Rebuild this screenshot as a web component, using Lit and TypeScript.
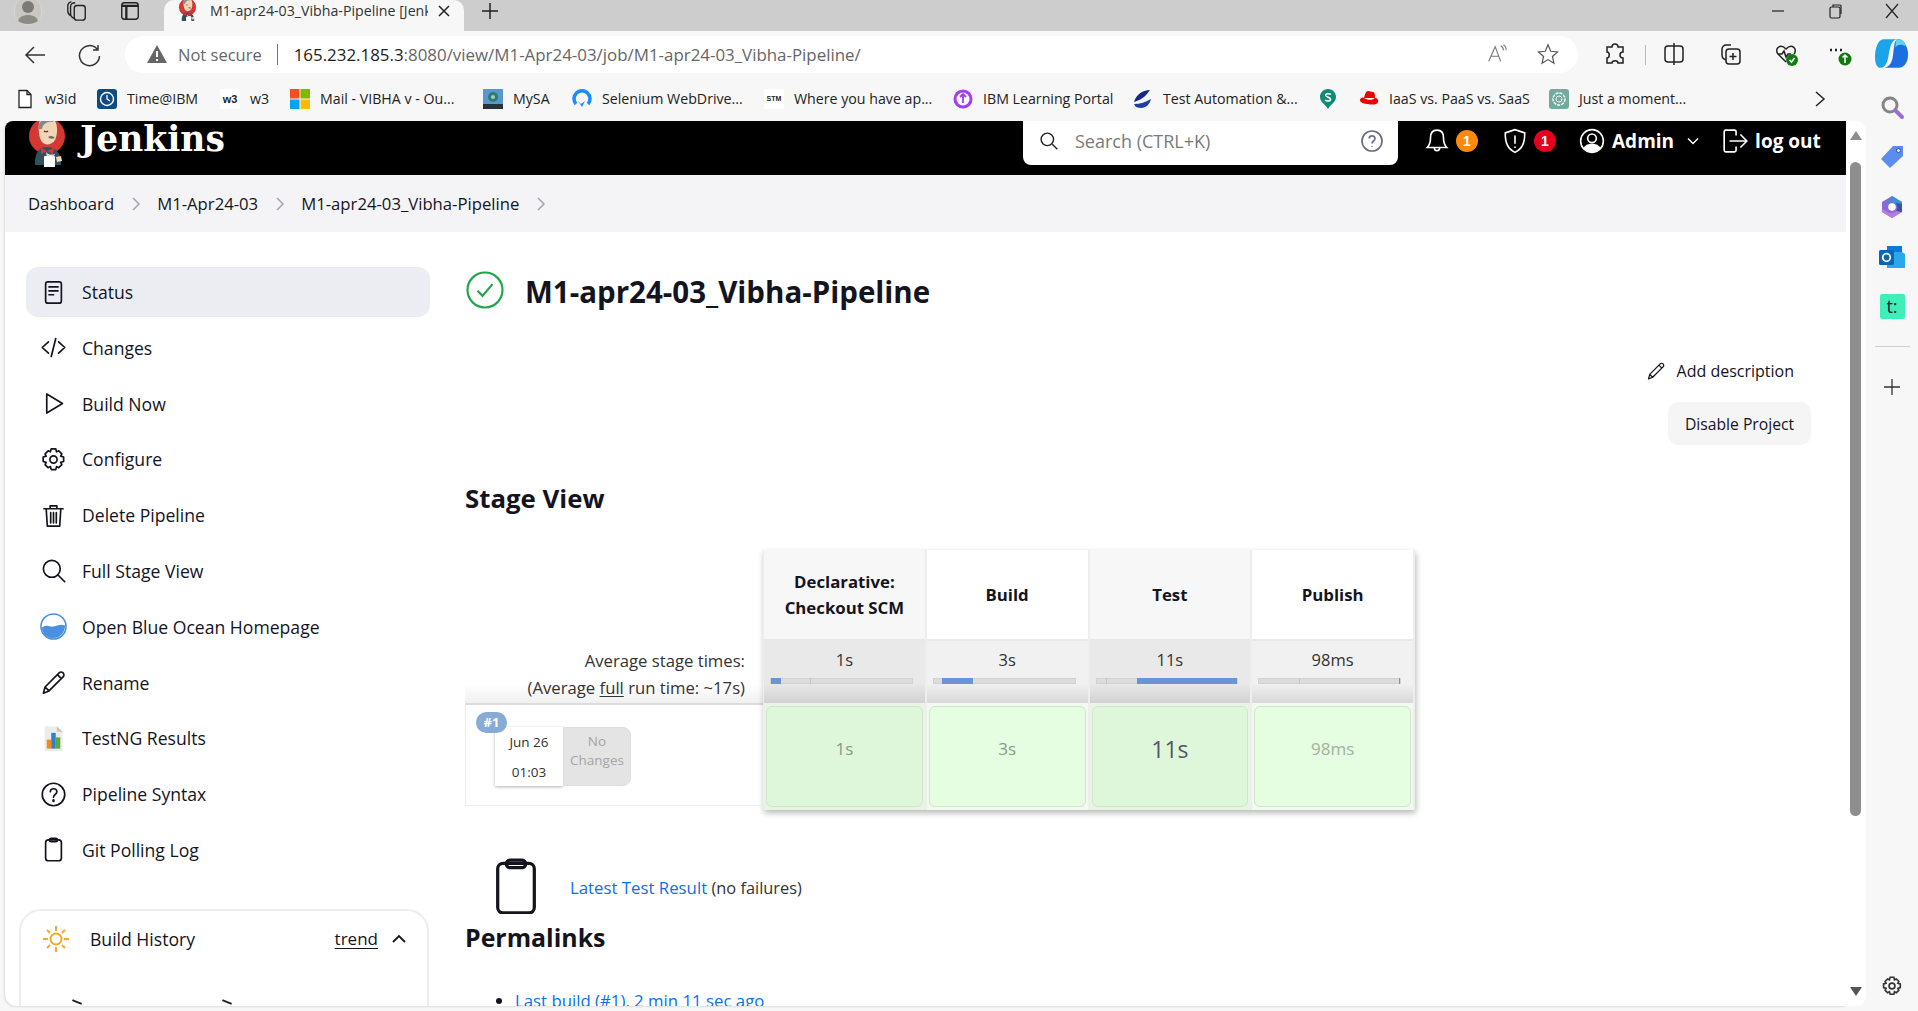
import { LitElement, html, css, svg } from 'lit';
import { customElement } from 'lit/decorators.js';

const butler = svg`
  <circle cx="20" cy="15" r="18" fill="#d33833"/>
  <path d="M8 44c-1-11 4-18 12-18s15 6 14 18z" fill="#335061"/>
  <path d="M12 2c1-6 15-7 17 0 2 5 1 13-1 17-3 5-10 6-13 2-3-4-4-13-3-19z" fill="#f0d6b7"/>
  <path d="M12 8c-2-8 6-11 11-10l4 3c-6-1-11 1-12 7z" fill="#7f8a90"/>
  <path d="M17 10c1 1 3 1 4 0" stroke="#49332a" stroke-width="1.200" fill="none"/>
  <path d="M21 16c3-2 5-1 7 1-3 1-5 1-7-1z" fill="#6d6b6d"/>
  <path d="M14 27l6 3 7-3-1 6-6-3-6 3z" fill="#d33833"/>
  <path d="M19 31c3 3 5 3 9 2l-3 6-5-1z" fill="#dcd9d8"/>
  <rect x="17" y="35" width="11" height="14" rx="1" fill="#fff"/>
  <path d="M29 36l5-1 1 5-5 1z" fill="#f0d6b7"/>
`;

const icons: Record<string, unknown> = {
  status: svg`<rect x="5" y="2.500" width="14" height="19" rx="2"/><path d="M8 7h8M8 10.500h8M8 14h4"/>`,
  changes: svg`<path d="M7.500 7 2 12l5.500 5M16.500 7l5.500 5-5.500 5M14 4l-4 16"/>`,
  play: svg`<path d="M6 3.500v17l14-8.500z"/>`,
  gear: svg`<circle cx="12" cy="12" r="3.200"/><path d="M10 2.500h4l.7 2.700 2-.9 2.700 2.700-1 2 2.600.8v4l-2.600.8 1 2-2.700 2.700-2-1-.7 2.700h-4l-.8-2.700-2 1-2.700-2.700 1-2-2.700-.8v-4l2.700-.8-1-2 2.700-2.700 2 .9z"/>`,
  trash: svg`<path d="M3.500 6h17M9 6V3.500h6V6M5.500 6l1 15.500h11l1-15.500M9.500 9.500v9M12 9.500v9M14.500 9.500v9"/>`,
  search: svg`<circle cx="10.500" cy="10.500" r="7.500"/><path d="m16 16 6 6"/>`,
  pencil: svg`<path d="M3 21.500 4.500 16 17 3.500c1-1 2.500-1 3.500 0s1 2.500 0 3.500L8 19.500zM4.500 16 8 19.500M15.500 5l3.500 3.500"/>`,
  help: svg`<circle cx="12" cy="12" r="10"/><path d="M9.200 9.500c0-3.500 5.800-3.500 5.800 0 0 2.500-3 2.500-3 5"/><path d="M12 17.200v.6" stroke-width="2.200"/>`,
  clipboard: svg`<rect x="5" y="3.500" width="14" height="18.500" rx="2.500"/><rect x="8.500" y="2" width="7" height="3" rx="1.500"/>`,
};

const icon = (name: string) => html`<svg class="icon" viewBox="0 0 24 24">${icons[name]}</svg>`;

const blueOcean = html`<svg class="icon" viewBox="0 0 28 28"><circle cx="14" cy="14" r="13" fill="#fff" stroke="#4a90e2" stroke-width="1.600"/><path d="M2 15c6-4 8 0 12-1s7-3 12-1c0 7-5 13-12 13S2 21 2 15z" fill="#4a90e2" stroke="none"/></svg>`;

const testNg = html`<svg class="icon plain" viewBox="0 0 24 24"><path d="M4 1h11l5 5v17H4z" fill="#ecece8"/><path d="M15 1v5h5z" fill="#c4c4bd"/><rect x="6" y="13" width="4" height="8" fill="#f08a1d"/><rect x="10" y="7" width="4" height="14" fill="#2f7fd1"/><rect x="14" y="11" width="4" height="10" fill="#58a83a"/></svg>`;

const navItems = [
  { label: 'Status', icon: icon('status'), active: true },
  { label: 'Changes', icon: icon('changes') },
  { label: 'Build Now', icon: icon('play') },
  { label: 'Configure', icon: icon('gear') },
  { label: 'Delete Pipeline', icon: icon('trash') },
  { label: 'Full Stage View', icon: icon('search') },
  { label: 'Open Blue Ocean Homepage', icon: blueOcean },
  { label: 'Rename', icon: icon('pencil') },
  { label: 'TestNG Results', icon: testNg },
  { label: 'Pipeline Syntax', icon: icon('help') },
  { label: 'Git Polling Log', icon: icon('clipboard') },
];

const bookmarks = [
  { label: 'w3id', w: 31, icon: html`<svg viewBox="0 0 20 20"><path d="M4 1.500h8l4 4v13H4z" fill="#fff" stroke="#222" stroke-width="1.300"/><path d="M12 1.500v4h4" fill="none" stroke="#222" stroke-width="1.300"/></svg>` },
  { label: 'Time@IBM', w: 72, icon: html`<svg viewBox="0 0 20 20"><rect width="20" height="20" rx="3" fill="#0f4a80"/><circle cx="10" cy="10" r="6.500" fill="none" stroke="#fff" stroke-width="1.400"/><path d="M10 6v4l3 2" fill="none" stroke="#fff" stroke-width="1.300"/></svg>` },
  { label: 'w3', w: 19, icon: html`<span class="w3-box">w3</span>` },
  { label: 'Mail - VIBHA v - Ou...', w: 142, icon: html`<svg viewBox="0 0 20 20"><rect width="9.500" height="9.500" fill="#f25022"/><rect x="10.500" width="9.500" height="9.500" fill="#7fba00"/><rect y="10.500" width="9.500" height="9.500" fill="#00a4ef"/><rect x="10.500" y="10.500" width="9.500" height="9.500" fill="#ffb900"/></svg>` },
  { label: 'MySA', w: 38, icon: html`<svg viewBox="0 0 20 20"><rect width="20" height="20" fill="#5b97cf"/><circle cx="10" cy="8" r="5" fill="#2f7d6b"/><circle cx="10" cy="8" r="2" fill="#9fd0c0"/><rect y="15" width="20" height="5" fill="#27323b"/></svg>` },
  { label: 'Selenium WebDrive...', w: 141, icon: html`<svg viewBox="0 0 20 20"><path d="M4 15A8 8 0 1 1 16 15" fill="none" stroke="#1a8cff" stroke-width="3.500"/><path d="m6 12 3 3 4-3-3 6z" fill="#1a8cff"/></svg>` },
  { label: 'Where you have ap...', w: 138, icon: html`<span class="stm-box">STM</span>` },
  { label: 'IBM Learning Portal', w: 129, icon: html`<svg viewBox="0 0 20 20"><circle cx="10" cy="10" r="9.500" fill="#a33df0"/><circle cx="10" cy="10" r="6.500" fill="#fff"/><path d="M10 5v9M7 8l3-3 3 3" stroke="#a33df0" stroke-width="1.800" fill="none"/></svg>` },
  { label: 'Test Automation &...', w: 134, icon: html`<svg viewBox="0 0 20 20"><path d="M1 13C3 6 9 1 17 1c-3 4-6 9-16 12z" fill="#14288a"/><path d="M1 15c6 0 12-2 17-5-1 5-5 9-10 9-3 0-6-1-7-4z" fill="#1f3fa8"/></svg>` },
  { label: '', w: 20, icon: html`<svg viewBox="0 0 20 20"><path d="M10 0c5 0 8 4 8 8 0 5-5 7-8 12-3-5-8-7-8-12 0-4 3-8 8-8z" fill="#0f8a74"/><path d="M13 5.500c-1-1-5-1.500-5.500.5s5.500 2 5 4.500-4.500 1.500-5.500.5" stroke="#fff" stroke-width="1.500" fill="none"/></svg>` },
  { label: 'IaaS vs. PaaS vs. SaaS', w: 139, icon: html`<svg viewBox="0 0 20 20"><path d="M5 9c1-4 2-7 4-7s3 1 5 1 2 4 2 6z" fill="#e00"/><path d="M1 11c0-2 3-3 4-2 3 2 7 3 11 0 2 0 4 2 3 4-1 3-6 3-10 2-3 0-8-1-8-4z" fill="#e00"/></svg>` },
  { label: 'Just a moment...', w: 108, icon: html`<svg viewBox="0 0 20 20"><rect width="20" height="20" rx="3" fill="#74aa9c"/><circle cx="10" cy="10" r="6" fill="none" stroke="#fff" stroke-width="1.400" stroke-dasharray="3 1"/><circle cx="10" cy="10" r="3" fill="none" stroke="#fff"/></svg>` },
];

const stages = [
  { name: ['Declarative:', 'Checkout SCM'], time: '1s', bar: [0, 7], tick: 28, shade: true, big: false, dim: false },
  { name: ['Build'], time: '3s', bar: [6, 28], tick: 6, shade: false, big: false, dim: false },
  { name: ['Test'], time: '11s', bar: [29, 100], tick: 7, shade: true, big: true, dim: false },
  { name: ['Publish'], time: '98ms', bar: [99.4, 100], tick: 28, shade: false, big: false, dim: true },
];

@customElement('app-root')
export class AppRoot extends LitElement {
  static styles = css`
    :host {
      display: flex;
      flex-direction: column;
      height: 1011px;
      overflow: hidden;
      background: #f7f7f7;
      font-family: 'Open Sans', 'Noto Sans', sans-serif;
      color: #14141f;
    }
    svg { display: block; flex: none; }

    /* browser chrome */
    .tabbar {
      height: 31px;
      background: #cdcdcd;
      display: flex;
      align-items: center;
      flex: none;
      box-sizing: border-box;
      padding-bottom: 10px;
      overflow: hidden;
    }
    .avatar { width: 30px; height: 30px; margin-left: 13px; }
    .tb-ico { width: 22px; height: 22px; fill: none; stroke: #222; stroke-width: 1.500; }
    .tabs-ico { margin-left: 23px; }
    .side-ico { margin-left: 31px; }
    .tab {
      margin-left: 23px;
      width: 300px;
      height: 31px;
      align-self: flex-start;
      margin-bottom: -10px;
      background: #f7f7f7;
      border-radius: 10px 10px 0 0;
      display: flex;
      align-items: center;
      font-size: 14.200px;
      color: #333;
      box-sizing: border-box;
      padding: 0 0 10px 13px;
    }
    .tab svg.fav { width: 21px; height: 22px; margin-right: 12px; }
    .tab span { width: 218px; overflow: hidden; white-space: nowrap; }
    .tab .x { width: 14px; height: 14px; margin-left: 9px; fill: none; stroke: #222; stroke-width: 1.500; }
    .plus { width: 18px; height: 18px; margin-left: 17px; stroke: #222; stroke-width: 1.500; }
    .winctl { margin-left: auto; display: flex; gap: 41px; padding-right: 18px; align-items: center; }
    .winctl svg { width: 16px; height: 16px; fill: none; stroke: #222; stroke-width: 1.200; }

    .toolbar { height: 48px; display: flex; align-items: flex-start; flex: none; padding-top: 5px; box-sizing: border-box; }
    .nav-ico { width: 24px; height: 24px; fill: none; stroke: #333; stroke-width: 1.500; margin-top: 7px; }
    .back { margin-left: 23px; }
    .reload { margin-left: 31px; }
    .address {
      margin-left: 23px;
      width: 1453px;
      height: 37px;
      background: #fff;
      border-radius: 19px;
      display: flex;
      align-items: center;
      box-sizing: border-box;
      padding: 0 0 1px 22px;
      font-size: 16.500px;
      color: #666;
      white-space: nowrap;
    }
    .address .warn { width: 20px; height: 20px; margin-right: 11px; }
    .address .sep { width: 1px; height: 21px; background: #777; margin: 0 16px 0 15px; }
    .address .url { font-size: 16.900px; }
    .address b { font-weight: 400; color: #222; }
    .address .read { margin-left: auto; width: 22px; height: 22px; fill: none; stroke: #777; stroke-width: 1.200; }
    .address .star { width: 22px; height: 22px; margin: 0 19px 0 29px; fill: none; stroke: #555; stroke-width: 1.300; }
    .tools { display: flex; align-items: center; height: 37px; position: relative; flex: 1; }
    .tools svg { position: absolute; width: 24px; height: 24px; top: 6px; fill: none; stroke: #222; stroke-width: 1.500; }
    .tools .t1 { left: 25px; }
    .tools .tsep { position: absolute; left: 67px; top: 9px; width: 1px; height: 20px; background: #bbb; }
    .tools .t2 { left: 84px; }
    .tools .t3 { left: 140px; }
    .tools .t4 { left: 196px; }
    .tools .t5 { left: 250px; }
    .tools .t6 { left: 297px; top: 1px; width: 34px; height: 34px; stroke: none; }

    .bookmarks {
      height: 42px;
      display: flex;
      align-items: center;
      gap: 21px;
      padding: 0 0 3px 15px;
      box-sizing: border-box;
      flex: none;
      font-size: 14.200px;
      color: #222;
      white-space: nowrap;
    }
    .bm { display: flex; align-items: center; gap: 10px; }
    .bm svg { width: 20px; height: 20px; }
    .bm span.txt { display: block; }
    .w3-box, .stm-box {
      width: 20px;
      height: 20px;
      background: #fff;
      font: 700 11px 'Liberation Sans', sans-serif;
      display: flex;
      align-items: center;
      justify-content: center;
    }
    .stm-box { font-size: 7px; }
    .bm-more { width: 16px; height: 16px; margin-left: auto; margin-right: 90px; fill: none; stroke: #222; stroke-width: 1.500; }

    /* page */
    .window { flex: none; height: 885px; display: flex; }
    .page {
      margin-left: 5px;
      width: 1841px;
      height: 885px;
      background: #fff;
      overflow: hidden;
      border-radius: 8px 0 0 12px;
      box-shadow: -1px 1px 2px #ddd;
      font-size: 17.600px;
    }
    .scroll { width: 20px; height: 885px; background: #fff; border-radius: 0 10px 10px 0; position: relative; }
    .thumb { position: absolute; left: 4px; top: 41px; width: 11px; height: 654px; background: #8e8e8e; border-radius: 6px; }
    .arrow { position: absolute; left: 4px; width: 0; height: 0; border-left: 6.500px solid transparent; border-right: 6.500px solid transparent; }
    .arrow.up { top: 10px; border-bottom: 9px solid #8e8e8e; }
    .arrow.down { bottom: 10px; border-top: 9px solid #555; }
    .rail { flex: 1; display: flex; flex-direction: column; align-items: center; }
    .rail svg { width: 26px; height: 26px; margin-top: 24px; }
    .rail svg:first-child { margin-top: -27px; }
    .rail .t-box {
      width: 25px;
      height: 25px;
      margin-top: 24px;
      background: #3eefb9;
      border-radius: 2px;
      color: #123;
      font-size: 18px;
      text-align: center;
      line-height: 24px;
    }
    .rail .div { width: 35px; height: 1px; background: #ccc; margin-top: 27px; }
    .rail .add { width: 18px; height: 18px; margin-top: 31px; stroke: #333; stroke-width: 1.300; }
    .rail .cog { margin-top: auto; margin-bottom: 9px; width: 22px; height: 22px; fill: none; stroke: #333; stroke-width: 1.800; }

    /* jenkins header */
    .head { height: 54px; background: #000; display: flex; color: #fff; }
    .logo { width: 40px; height: 46px; margin: 0 0 0 22px; overflow: hidden; }
    .brand { font: 700 34.500px/36px 'DejaVu Serif', serif; margin: 0 0 0 13px; width: 146px; flex: none; white-space: nowrap; }
    .search {
      margin-left: 797px;
      width: 375px;
      height: 44px;
      background: #fff;
      border-radius: 0 0 8px 8px;
      display: flex;
      align-items: center;
      color: #7a7a7a;
      font-size: 18px;
      box-sizing: border-box;
      padding: 0 0 5px 16px;
    }
    .search .mag { width: 20px; height: 20px; margin-right: 16px; fill: none; stroke: #222; stroke-width: 1.700; }
    .search .q { width: 24px; height: 24px; margin-left: auto; margin-right: 14px; fill: none; stroke: #6d6d85; stroke-width: 1.700; }
    .head-items { display: flex; align-items: center; height: 40px; font-weight: 700; font-size: 19px; margin-left: 26px; }
    .head-items svg { fill: none; stroke: #fff; stroke-width: 1.500; width: 26px; height: 26px; }
    .count {
      width: 22px;
      height: 22px;
      border-radius: 50%;
      font: 700 14px/22px 'Liberation Sans', sans-serif;
      text-align: center;
      margin-left: 6px;
    }
    .count.orange { background: #fd8a0d; }
    .count.red { background: #e6001f; }
    .shield { margin-left: 24px; }
    .user { margin-left: 23px; }
    .user svg { stroke-width: 1.600; }
    .admin { margin-left: 7px; }
    .caret { width: 12px !important; height: 12px !important; margin-left: 13px; stroke-width: 1.500; }
    .out-ico { margin-left: 23px; }
    .out { margin-left: 7px; }

    .crumbs {
      height: 57px;
      background: #f4f4f6;
      display: flex;
      align-items: center;
      padding-left: 23px;
      font-size: 16.700px;
      font-weight: 500;
    }
    .crumbs svg { width: 12px; height: 16px; margin: 0 15.500px; fill: none; stroke: #a3a3b3; stroke-width: 1.500; }

    .body { display: flex; }
    .side { width: 404px; margin-left: 21px; padding-top: 35px; flex: none; }
    .nav { display: flex; flex-direction: column; gap: 5.800px; }
    .nav-item { height: 50px; display: flex; align-items: center; border-radius: 12px; font-weight: 500; }
    .nav-item.active { background: #ecedf2; }
    .nav-item .slot { width: 54px; margin-right: 2px; display: flex; justify-content: center; }
    .icon { width: 27px; height: 27px; fill: none; stroke: #14141f; stroke-width: 1.500; stroke-linecap: round; stroke-linejoin: round; }
    .icon.plain { stroke: none; }
    .history {
      margin: 34px 0 0 -7px;
      width: 410px;
      height: 140px;
      border: 2px solid #ecedf3;
      border-radius: 22px;
      box-sizing: border-box;
      position: relative;
    }
    .hist-head { display: flex; align-items: center; height: 56px; padding-left: 20px; font-weight: 500; }
    .hist-head svg.sun { width: 30px; height: 30px; margin-right: 19px; }
    .trend { margin-left: auto; font-size: 17px; text-decoration: underline; text-underline-offset: 3px; }
    .hist-head svg.up { width: 16px; height: 16px; margin: 0 20px 0 13px; fill: none; stroke: #14141f; stroke-width: 1.800; }
    .hist-marks { display: flex; gap: 140px; padding: 34px 0 0 51px; }
    .hist-marks i { display: block; width: 10px; height: 2px; background: #222; transform: rotate(22deg); }

    .main { margin-left: 35px; width: 1346px; padding-top: 36px; font-weight: 400; }
    .title { display: flex; align-items: center; height: 44px; }
    .title svg { width: 40px; height: 40px; margin-right: 20px; fill: none; stroke: #1ea64a; stroke-width: 1.300; }
    h1 { margin: 0; padding-top: 2px; font-size: 29.500px; font-weight: 700; }
    h2 { margin: 0; font-size: 24.900px; line-height: 30px; font-weight: 700; }
    .actions { display: flex; flex-direction: column; align-items: flex-end; padding-top: 47px; }
    .add-desc { display: flex; align-items: center; height: 24px; margin-right: 17px; font-size: 16px; font-weight: 500; }
    .add-desc svg { width: 20px; height: 20px; margin-right: 11px; }
    .disable {
      margin-top: 19px;
      height: 43px;
      width: 143px;
      background: #f5f5f5;
      border-radius: 10px;
      display: flex;
      align-items: center;
      justify-content: center;
      font-size: 15.700px;
      font-weight: 500;
    }
    h2.stage-title { margin-top: 38px; font-size: 25.800px; }

    .stage { display: flex; margin-top: 37px; }
    .stage-left { width: 298px; flex: none; padding-top: 90px; }
    .avg {
      height: 65px;
      box-sizing: border-box;
      text-align: right;
      padding: 8px 18px 0 0;
      font-size: 16.700px;
      line-height: 26.500px;
      color: #333;
      background: linear-gradient(#fff, #fff 70%, #f0f0f0);
      border-bottom: 2px solid #dcdcdc;
    }
    .avg u { text-underline-offset: 2px; }
    .run {
      height: 101px;
      box-sizing: border-box;
      border-left: 1px solid #eee;
      border-bottom: 1px solid #eee;
      position: relative;
      padding: 22px 0 0 29px;
      display: flex;
      align-items: flex-start;
    }
    .run-no {
      position: absolute;
      left: 10px;
      top: 7px;
      width: 31px;
      height: 21px;
      border-radius: 11px;
      background: #86abd4;
      color: #fff;
      font-size: 13px;
      font-weight: 700;
      line-height: 21px;
      text-align: center;
    }
    .date {
      width: 68px;
      height: 59px;
      background: #fff;
      box-shadow: 0 1px 3px rgba(0,0,0,.3);
      font-size: 13.500px;
      line-height: 29.500px;
      text-align: center;
      color: #333;
      padding-top: 1px;
      box-sizing: border-box;
    }
    .nochg {
      width: 68px;
      height: 59px;
      background: #e4e4e4;
      border-radius: 0 8px 8px 0;
      border: 1px solid #ddd;
      box-sizing: border-box;
      padding-top: 3.500px;
      color: #a5a5a5;
      font-size: 13.500px;
      line-height: 19px;
      text-align: center;
    }
    .table {
      display: grid;
      grid-template-columns: repeat(4, 1fr);
      width: 652px;
      height: 260px;
      padding: 0 2px 0 1px;
      box-sizing: border-box;
      box-shadow: 1px 3px 6px rgba(0,0,0,.28);
      background: #eee;
      column-gap: 2px;
    }
    .col { display: flex; flex-direction: column; background: #fff; min-width: 0; }
    .col-head {
      border-bottom: 2px solid #e8e8e8;
      display: flex;
      align-items: center;
      justify-content: center;
      text-align: center;
      font-weight: 700;
      font-size: 16.800px;
      line-height: 26px;
      padding-top: 1px;
      box-sizing: border-box;
      flex: none;
      height: 91px;
    }
    .col-avg {
      height: 62px;
      flex: none;
      background: linear-gradient(#f1f1f1, #f1f1f1 68%, #d8d8d8);
      text-align: center;
      font-size: 16.500px;
      color: #333;
      padding-top: 8px;
      box-sizing: border-box;
      line-height: 22px;
    }
    .col.shade .col-head { background: #f7f7f7; }
    .col.shade .col-avg { background: linear-gradient(#e9e9e9, #e9e9e9 68%, #d2d2d2); }
    .bar { height: 6px; margin: 7px 12px 0 6px; background: #dcdcdc; border: 1px solid #d2d2d2; box-sizing: border-box; position: relative; }
    .bar i { position: absolute; top: -1px; height: 6px; background: #6a94d6; }
    .bar em { position: absolute; top: -1px; width: 1px; height: 6px; background: #c6c6c6; }
    .cell-wrap { flex: 1; background: #f0faee; padding: 3px 2px; display: flex; }
    .col.shade .cell-wrap { background: #e8f5e5; }
    .cell {
      flex: 1;
      border: 1px solid #d3e3d0;
      border-radius: 6px;
      background: #e5fde1;
      display: flex;
      justify-content: center;
      padding-top: 28px;
      font-size: 17px;
      line-height: 28px;
      color: #8a9a88;
      box-sizing: border-box;
    }
    .col.shade .cell { background: #def7db; }
    .cell.big { font-size: 23px; color: #556; }
    .cell.dim { color: #a3b1a1; }

    .result { display: flex; margin: 48px 0 0 25px; height: 56px; }
    .result svg { width: 52px; height: 56px; margin-right: 28px; fill: none; stroke: #14141f; stroke-width: 1.500; }
    .result p { margin: 18px 0 0; font-size: 16.400px; line-height: 24px; color: #333; }
    .result a { font-size: 16.800px; }
    a { color: #0b6fe8; text-decoration: none; font-weight: 500; }
    .perma { margin-top: 8px; }
    ul { margin: 37px 0 0; padding: 0 0 0 50px; font-size: 16.800px; line-height: 24px; }
  `;

  render() {
    return html`
      <div class="tabbar">
        <svg class="avatar" viewBox="0 0 30 30"><circle cx="15" cy="15" r="14" fill="#c9c7c2" stroke="#d9d8d2"/><circle cx="15" cy="11" r="6" fill="#7c7a76"/><path d="M5 25c2-8 18-8 20 0-5 4-15 4-20 0z" fill="#8d8b86"/></svg>
        <svg class="tb-ico tabs-ico" viewBox="0 0 24 24"><rect x="9" y="6" width="12" height="16" rx="3"/><path d="M9 20c-3-1-4-3-4-5V7c0-2 2-4 5-4M5 17c-2-1-3-3-3-5V6c0-2 2-4 4-4"/></svg>
        <svg class="tb-ico side-ico" viewBox="0 0 24 24"><rect x="3" y="3" width="18" height="18" rx="3"/><path d="M3 6.500h18M8 6.500V21" stroke-width="2.500"/></svg>
        <div class="tab">
          <svg class="fav" viewBox="0 0 40 46">${butler}</svg>
          <span>M1-apr24-03_Vibha-Pipeline [Jenkins]</span>
          <svg class="x" viewBox="0 0 14 14"><path d="M2 2l10 10M12 2 2 12"/></svg>
        </div>
        <svg class="plus" viewBox="0 0 18 18"><path d="M9 1v16M1 9h16"/></svg>
        <div class="winctl">
          <svg viewBox="0 0 16 16"><path d="M2 8h12"/></svg>
          <svg viewBox="0 0 16 16"><rect x="3" y="4" width="10" height="11" rx="1.500"/><path d="M6 4V2h7c1 0 1 1 1 1v8"/></svg>
          <svg viewBox="0 0 16 16"><path d="m2 1 12 14M14 1 2 15"/></svg>
        </div>
      </div>

      <div class="toolbar">
        <svg class="nav-ico back" viewBox="0 0 24 24"><path d="M22 12H3M11 4l-8 8 8 8"/></svg>
        <svg class="nav-ico reload" viewBox="0 0 24 24"><path d="M19 6a10 10 0 1 0 2.500 7M20 2v5h-5"/></svg>
        <div class="address">
          <svg class="warn" viewBox="0 0 20 20"><path d="M10 1 20 19H0z" fill="#666"/><path d="M10 7v6M10 15v2" stroke="#fff" stroke-width="2"/></svg>
          Not secure<span class="sep"></span><span class="url"><b>165.232.185.3</b>:8080/view/M1-Apr24-03/job/M1-apr24-03_Vibha-Pipeline/</span>
          <svg class="read" viewBox="0 0 24 24"><path d="M3 20 10 4l6 16M5.500 14.500h9M16 3c2 1 3 3 3 5M19 2c2 1 3 4 3 6"/></svg>
          <svg class="star" viewBox="0 0 24 24"><path d="m12 2 3 7 7.500.7-5.700 5 1.700 7.300-6.500-3.900L5.500 22l1.700-7.300-5.700-5L9 9z"/></svg>
        </div>
        <div class="tools">
          <svg class="t1" viewBox="0 0 24 24"><path d="M9 5c0-4 6-4 6 0h5v5c-4 0-4 6 0 6v5h-5c0-3-6-3-6 0H4v-5c3 0 3-6 0-6V5z"/></svg>
          <span class="tsep"></span>
          <svg class="t2" viewBox="0 0 24 24"><rect x="3" y="4" width="18" height="16" rx="3"/><path d="M12 1v22"/></svg>
          <svg class="t3" viewBox="0 0 24 24"><rect x="8" y="7" width="14" height="15" rx="3"/><path d="M15 11v7M11.500 14.500h7M8 18c-3-1-4-3-4-5V7c0-2 2-4 4-4h5"/></svg>
          <svg class="t4" viewBox="0 0 24 24"><path d="M12 20 4 12C0 7 6 1 12 7c6-6 12 0 8 5"/><path d="M4 12h4l2-3 2 6 2-3h3"/><circle cx="18" cy="18" r="6" fill="#107c10" stroke="none"/><path d="m15.500 18 2 2 3-4" stroke="#fff"/></svg>
          <svg class="t5" viewBox="0 0 24 24"><path d="M2 8h2M7 8h2M12 8h2" stroke-width="2.400"/><circle cx="17" cy="17" r="6.500" fill="#107c10" stroke="none"/><path d="M17 21v-8M14.500 15.500 17 13l2.500 2.500" stroke="#fff"/></svg>
          <svg class="t6" viewBox="0 0 32 32"><path d="M8 2h12c-5 2-6 8-7 14-1 7-3 13-8 13-3 0-5-4-5-10C0 10 3 2 8 2z" fill="#1aa5e8"/><path d="M22 2c5 0 8 6 9 12 1 8-3 15-9 15H9c5-1 7-5 8-12 1-8 1-15 5-15z" fill="#1c6fe0"/><path d="M20 2h3c3 0 5 3 6 7-4-3-8-2-10 1z" fill="#5fd4e8"/></svg>
        </div>
      </div>

      <div class="bookmarks">
        ${bookmarks.map(b => html`
          <div class="bm">${b.icon}${b.label ? html`<span class="txt" style="width:${b.w}px">${b.label}</span>` : ''}</div>
        `)}
        <svg class="bm-more" viewBox="0 0 16 16"><path d="m4 1 8 7-8 7"/></svg>
      </div>

      <div class="window">
        <div class="page">
          <header class="head">
            <svg class="logo" viewBox="0 0 40 46">${butler}</svg>
            <div class="brand">Jenkins</div>
            <div class="search">
              <svg class="mag" viewBox="0 0 24 24"><circle cx="10" cy="10" r="7.500"/><path d="m16 16 6 6"/></svg>
              Search (CTRL+K)
              <svg class="q" viewBox="0 0 24 24"><circle cx="12" cy="12" r="10"/><path d="M9.200 9.500c0-3.500 5.800-3.500 5.800 0 0 2.500-3 2.500-3 5M12 17.200v.8"/></svg>
            </div>
            <div class="head-items">
              <svg viewBox="0 0 24 24"><path d="M12 2c-4 0-6 3-6 7 0 5-1 7-3 9h18c-2-2-3-4-3-9 0-4-2-7-6-7zM9.500 18c0 4 5 4 5 0"/></svg>
              <div class="count orange">1</div>
              <svg class="shield" viewBox="0 0 24 24"><path d="M12 1.500 3 4.500c0 9 2 14.500 9 18 7-3.500 9-9 9-18zM12 7v7.500M12 17v1.500"/></svg>
              <div class="count red">1</div>
              <svg class="user" viewBox="0 0 24 24"><circle cx="12" cy="12" r="10.500"/><circle cx="12" cy="9.500" r="4"/><path d="M4.500 19c3-5 12-5 15 0-3 4-12 4-15 0z" fill="#fff"/></svg>
              <div class="admin">Admin</div>
              <svg class="caret" viewBox="0 0 12 12"><path d="m1 3.500 5 5 5-5"/></svg>
              <svg class="out-ico" viewBox="0 0 24 24"><path d="M13 7V3.500c0-1-1-1.500-1.500-1.500H3.500C2.500 2 2 3 2 3.500v17c0 1 1 1.500 1.500 1.500h8c1 0 1.500-1 1.500-1.500V17M7 12h16M17 6l6 6-6 6"/></svg>
              <div class="out">log out</div>
            </div>
          </header>

          <nav class="crumbs">
            Dashboard
            <svg viewBox="0 0 12 16"><path d="m3 2 6 6-6 6"/></svg>
            M1-Apr24-03
            <svg viewBox="0 0 12 16"><path d="m3 2 6 6-6 6"/></svg>
            M1-apr24-03_Vibha-Pipeline
            <svg viewBox="0 0 12 16"><path d="m3 2 6 6-6 6"/></svg>
          </nav>

          <div class="body">
            <aside class="side">
              <div class="nav">
                ${navItems.map(i => html`
                  <div class="nav-item ${i.active ? 'active' : ''}">
                    <span class="slot">${i.icon}</span>${i.label}
                  </div>
                `)}
              </div>
              <div class="history">
                <div class="hist-head">
                  <svg class="sun" viewBox="0 0 30 30"><circle cx="15" cy="15" r="5.500" fill="none" stroke="#f9a825" stroke-width="2"/><path d="M15 2v5M15 23v5M2 15h5M23 15h5M6 6l3 3M21 21l3 3M24 6l-3 3M9 21l-3 3" stroke="#f9a825" stroke-width="2"/></svg>
                  Build History
                  <span class="trend">trend</span>
                  <svg class="up" viewBox="0 0 16 16"><path d="m2 11 6-6 6 6"/></svg>
                </div>
                <div class="hist-marks"><i></i><i></i></div>
              </div>
            </aside>

            <main class="main">
              <div class="title">
                <svg viewBox="0 0 24 24"><circle cx="12" cy="12" r="10.500"/><path d="m7.500 12.500 3 3 6-7"/></svg>
                <h1>M1-apr24-03_Vibha-Pipeline</h1>
              </div>
              <div class="actions">
                <div class="add-desc"><svg class="icon" viewBox="0 0 24 24">${icons.pencil}</svg>Add description</div>
                <div class="disable">Disable Project</div>
              </div>
              <h2 class="stage-title">Stage View</h2>
              <div class="stage">
                <div class="stage-left">
                  <div class="avg">Average stage times:<br />(Average <u>full</u> run time: ~17s)</div>
                  <div class="run">
                    <span class="run-no">#1</span>
                    <div class="date">Jun 26<br />01:03</div>
                    <div class="nochg">No<br />Changes</div>
                  </div>
                </div>
                <div class="table">
                  ${stages.map(s => html`
                    <div class="col ${s.shade ? 'shade' : ''}">
                      <div class="col-head"><div>${s.name.map(n => html`${n}<br />`)}</div></div>
                      <div class="col-avg">
                        ${s.time}
                        <div class="bar">
                          <em style="left:${s.tick}%"></em>
                          <i style="left:${s.bar[0]}%;width:${s.bar[1] - s.bar[0]}%"></i>
                        </div>
                      </div>
                      <div class="cell-wrap">
                        <div class="cell ${s.big ? 'big' : ''} ${s.dim ? 'dim' : ''}">${s.time}</div>
                      </div>
                    </div>
                  `)}
                </div>
              </div>
              <div class="result">
                <svg viewBox="0 0 24 26"><rect x="3.500" y="2.500" width="17" height="23" rx="2.500"/><rect x="7.500" y="1" width="9" height="3.500" rx="1.700"/></svg>
                <p><a>Latest Test Result</a> (no failures)</p>
              </div>
              <h2 class="perma">Permalinks</h2>
              <ul><li><a>Last build (#1), 2 min 11 sec ago</a></li></ul>
            </main>
          </div>
        </div>

        <div class="scroll">
          <span class="arrow up"></span>
          <span class="thumb"></span>
          <span class="arrow down"></span>
        </div>

        <div class="rail">
          <svg viewBox="0 0 26 26"><circle cx="11" cy="11" r="7" fill="none" stroke="#858585" stroke-width="3"/><path d="m17 17 6 6" stroke="#9b6fd1" stroke-width="4" stroke-linecap="round"/></svg>
          <svg viewBox="0 0 26 26"><path d="M14 2h10v10L11 24 2 15z" fill="#5b8def"/><circle cx="19.500" cy="6.500" r="2" fill="#fff" stroke="#274b9f"/></svg>
          <svg viewBox="0 0 26 26"><path d="M13 2 23 8v10l-10 6L3 18V8z" fill="#8a6ad6"/><path d="M13 2 23 8v6l-6-2c-1-4-6-5-9-3z" fill="#3e8ed8"/><path d="M3 15l6 3c3 2 7 1 9-2l5 2-10 6-10-6z" fill="#b77bdc"/><path d="M16 9c3 2 3 6 1 8l6 1v-8z" fill="#3a4fb0"/><circle cx="13" cy="13" r="3.800" fill="#fff"/></svg>
          <svg viewBox="0 0 26 26"><path d="M8 2h15v6H8z" fill="#0f78d4"/><path d="M8 8h15l3 2v13c0 1-1 1-1 1H8z" fill="#29a8ea"/><rect y="6" width="15" height="15" rx="1.500" fill="#0a64b8"/><circle cx="7.500" cy="13.500" r="3.800" fill="none" stroke="#fff" stroke-width="1.800"/></svg>
          <div class="t-box">t:</div>
          <div class="div"></div>
          <svg class="add" viewBox="0 0 18 18"><path d="M9 1v16M1 9h16"/></svg>
          <svg class="cog" viewBox="0 0 24 24"><circle cx="12" cy="12" r="3.200"/><path d="M10 2.500h4l.7 2.700 2-.9 2.700 2.700-1 2 2.600.8v4l-2.600.8 1 2-2.700 2.700-2-1-.7 2.700h-4l-.8-2.700-2 1-2.700-2.700 1-2-2.700-.8v-4l2.700-.8-1-2 2.700-2.700 2 .9z"/></svg>
        </div>
      </div>
    `;
  }
}
